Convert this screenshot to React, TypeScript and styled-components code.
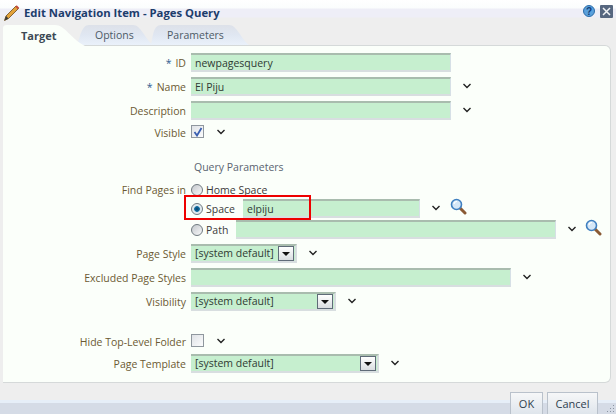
import styled, { createGlobalStyle } from 'styled-components';

const GlobalStyle = createGlobalStyle`
    html, body {
        margin: 0;
        padding: 0;
        background: #eeeeee;
    }
    * {
        box-sizing: border-box;
    }
`;

const Dialog = styled.div`
    width: 616px;
    height: 414px;
    overflow: hidden;
    display: flex;
    flex-direction: column;
    font-family: 'Open Sans', 'Liberation Sans', sans-serif;
    font-size: 10.5px;
    color: #3b3b3b;
    background: #eeeeee;
`;
const Header = styled.div`
    height: 25px;
    flex: none;
    display: flex;
    align-items: center;
    padding: 0 3px 0 3px;
    background: linear-gradient(180deg, #ffffff 0, #fbfdfd 8px, #eeeef7 9px, #eeeef7 17px, #eeeeee 18px);
`;
const Title = styled.h1`
    margin: 0 0 0 4px;
    font-size: 11.3px;
    font-weight: 700;
    color: #1d3d6b;
    flex: 1;
`;
const HeaderIcons = styled.div`
    display: flex;
    align-items: center;
    gap: 5px;
    margin-bottom: 3px;
`;
const TabBar = styled.div`
    height: 20px;
    flex: none;
    display: flex;
    padding-left: 3px;
    position: relative;
    z-index: 1;
`;
const TargetTab = styled.div`
    width: 82px;
    height: 21px;
    margin-right: -8px;
    padding-left: 18px;
    line-height: 21px;
    font-size: 11px;
    font-weight: 700;
    color: #3c4a55;
    background: #fbfffa;
    clip-path: path('M0 21 L0 3 Q0 0 4 0 L52 0 C62 0 68 14 82 21 Z');
    position: relative;
    z-index: 2;
`;
const Tab = styled.div<{ $w: number; $clip: string; $pad: number }>`
    width: ${(p) => p.$w}px;
    height: 20px;
    margin-right: -2px;
    padding-left: ${(p) => p.$pad}px;
    line-height: 21px;
    color: #4d5a66;
    background: linear-gradient(180deg, #dde1e9 0, #e0e7f2 50%, #eaf1fa 100%);
    clip-path: path('${(p) => p.$clip}');
`;
const Panel = styled.div`
    height: 338px;
    flex: none;
    margin: 0 5px 0 3px;
    padding-top: 7px;
    background: #fbfffa;
    border: 1px solid #d5d9d9;
    border-left: none;
    border-radius: 0 6px 6px 0;
    position: relative;
`;
const Row = styled.div<{ $h: number }>`
    height: ${(p) => p.$h}px;
    display: flex;
    align-items: flex-start;
    position: relative;
`;
const Label = styled.div`
    width: 183px;
    margin-right: 5px;
    text-align: right;
    line-height: 21px;
    color: #6b5a33;
    white-space: nowrap;
`;
const Required = styled.span`
    color: #2f5d91;
    margin-right: 4px;
`;
const SectionTitle = styled.div`
    padding-left: 3px;
    line-height: 19px;
    color: #5a6470;
`;
const Field = styled.div<{ $w: number }>`
    width: ${(p) => p.$w}px;
    height: 19px;
    flex: none;
    padding-left: 4px;
    color: #2f3a33;
    background: #c6efcf;
    border-top: 2px solid #a9bcae;
    border-bottom: 2px solid #d8dee0;
    border-right: 1px solid #d6e0e6;
    line-height: 17px;
`;
const SelectBox = styled(Field)`
    display: flex;
    justify-content: space-between;
    align-items: center;
    padding-right: 1px;
    border-right: 2px solid #d8dee0;
`;
const SelectButton = styled.span`
    width: 16px;
    height: 15px;
    display: flex;
    align-items: center;
    justify-content: center;
    background: linear-gradient(180deg, #ffffff, #d9dde0);
    border: 1px solid #5f6b78;
`;
const Arrow = styled.span`
    width: 0;
    height: 0;
    border-left: 4px solid transparent;
    border-right: 4px solid transparent;
    border-top: 4px solid #111111;
`;
const Check = styled.span`
    width: 13px;
    height: 13px;
    margin-top: 2px;
    flex: none;
    display: flex;
    align-items: center;
    justify-content: center;
    background: linear-gradient(135deg, #dfe2e6, #fbfcfd);
    border: 1px solid #8f979e;
`;
const ChevronWrap = styled.span<{ $gap?: number }>`
    display: flex;
    margin-left: ${(p) => p.$gap ?? 12}px;
    margin-top: 6px;
    flex: none;
`;
const RadioGroup = styled.div`
    display: flex;
    align-items: center;
    height: 19px;
    color: #3b3b3b;
`;
const Radio = styled.span<{ $on?: boolean }>`
    width: 12px;
    height: 12px;
    margin-right: 3px;
    flex: none;
    border-radius: 50%;
    border: 1px solid #6f7a80;
    background: ${(p) =>
        p.$on
            ? 'radial-gradient(circle at 50% 50%, #0d3f66 0, #0f6ea3 35%, #dbe6ec 45%, #f4f6f7 100%)'
            : 'linear-gradient(135deg, #c4c8cc, #f8f9fa)'};
`;
const RadioLabel = styled.span<{ $w?: number }>`
    width: ${(p) => (p.$w ? `${p.$w}px` : 'auto')};
    flex: none;
`;
const LensWrap = styled.span<{ $gap: number }>`
    display: flex;
    flex: none;
    margin-left: ${(p) => p.$gap}px;
    margin-top: -1px;
`;
const Highlight = styled.div`
    position: absolute;
    left: 181px;
    top: -4px;
    width: 127px;
    height: 25px;
    border: 2px solid #ee0000;
    pointer-events: none;
`;
const Footer = styled.div`
    flex: 1;
    display: flex;
    justify-content: flex-end;
    align-items: flex-start;
    gap: 4px;
    padding: 9px 18px 0 0;
    background: linear-gradient(180deg, #eeeeee 0, #eeeeee 17px, #e6eef8 17px, #e6eef8 20px, #d5dbe6 20px);
    position: relative;
`;
const Button = styled.button<{ $w: number }>`
    width: ${(p) => p.$w}px;
    height: 23px;
    padding: 0 0 1px;
    font-family: inherit;
    font-size: 11px;
    color: #2f3e4e;
    background: linear-gradient(180deg, #f6f7f8, #dfe5ec);
    border: 1px solid #b9c1cb;
    border-bottom-color: #8f99a6;
`;
const Grip = styled.svg`
    position: absolute;
    right: 1px;
    bottom: 1px;
`;

const Chevron = () => (
    <svg width="8" height="6" viewBox="0 0 8 6">
        <path d="M0.5 1 L4 4.5 L7.5 1" fill="none" stroke="#222222" strokeWidth="1.4" />
    </svg>
);

const Pencil = () => (
    <svg width="17" height="18" viewBox="0 0 17 18">
        <path d="M1.5 16.5 L3 12 L13 2 L15.5 4.5 L5.5 14.5 Z" fill="#e3a23a" stroke="#6a4a1e" strokeWidth="0.8" />
        <path d="M13 2 L15.5 4.5" stroke="#c24b3a" strokeWidth="2" />
        <path d="M1.5 16.5 L3 12 L5.5 14.5 Z" fill="#3b3b3b" />
    </svg>
);

const HelpIcon = () => (
    <svg width="12" height="12" viewBox="0 0 12 12">
        <circle cx="6" cy="6" r="5.5" fill="#5aa0dc" stroke="#2b6ca8" />
        <text x="6" y="9.5" textAnchor="middle" fontSize="10" fontWeight="700" fontFamily="Liberation Sans" fill="#0f3d78">
            ?
        </text>
    </svg>
);

const CloseIcon = () => (
    <svg width="13" height="13" viewBox="0 0 13 13">
        <rect width="13" height="13" rx="1" fill="#56677f" />
        <path d="M3 3 L10 10 M10 3 L3 10" stroke="#f2f4f6" strokeWidth="1.5" />
    </svg>
);

const Lens = () => (
    <svg width="17" height="17" viewBox="0 0 17 17">
        <path d="M10 10 L15 15" stroke="#8a5a34" strokeWidth="3" strokeLinecap="round" />
        <circle cx="6.5" cy="6.5" r="5" fill="#d5e7f7" stroke="#3f7fc0" strokeWidth="1.6" />
        <path d="M4 6 A3 3 0 0 1 7 3.5" fill="none" stroke="#ffffff" strokeWidth="1.2" />
    </svg>
);

const Tick = () => (
    <svg width="10" height="10" viewBox="0 0 10 10">
        <path d="M1.5 5 L4 8.5 L8.5 1" fill="none" stroke="#3a5fb0" strokeWidth="1.8" />
    </svg>
);

const Select = ({ w, value }: { w: number; value: string }) => (
    <SelectBox $w={w}>
        {value}
        <SelectButton>
            <Arrow />
        </SelectButton>
    </SelectBox>
);

export default function App() {
    return (
        <Dialog>
            <GlobalStyle />
            <Header>
                <Pencil />
                <Title>Edit Navigation Item - Pages Query</Title>
                <HeaderIcons>
                    <HelpIcon />
                    <CloseIcon />
                </HeaderIcons>
            </Header>
            <TabBar>
                <TargetTab>Target</TargetTab>
                <Tab $w={76} $pad={18} $clip="M0 20 C3 14 4 0 12 0 L56 0 C64 0 68 14 76 20 Z">
                    Options
                </Tab>
                <Tab $w={98} $pad={16} $clip="M0 20 C2 12 2 0 10 0 L78 0 C86 0 90 14 98 20 Z">
                    Parameters
                </Tab>
            </TabBar>
            <Panel>
                <Row $h={24}>
                    <Label>
                        <Required>*</Required>ID
                    </Label>
                    <Field $w={260}>newpagesquery</Field>
                </Row>
                <Row $h={24}>
                    <Label>
                        <Required>*</Required>Name
                    </Label>
                    <Field $w={260}>El Piju</Field>
                    <ChevronWrap>
                        <Chevron />
                    </ChevronWrap>
                </Row>
                <Row $h={22}>
                    <Label>Description</Label>
                    <Field $w={260} />
                    <ChevronWrap>
                        <Chevron />
                    </ChevronWrap>
                </Row>
                <Row $h={35}>
                    <Label>Visible</Label>
                    <Check>
                        <Tick />
                    </Check>
                    <ChevronWrap $gap={13}>
                        <Chevron />
                    </ChevronWrap>
                </Row>
                <Row $h={22}>
                    <Label />
                    <SectionTitle>Query Parameters</SectionTitle>
                </Row>
                <Row $h={19}>
                    <Label>Find Pages in</Label>
                    <RadioGroup>
                        <Radio />
                        Home Space
                    </RadioGroup>
                </Row>
                <Row $h={21}>
                    <Label />
                    <RadioGroup>
                        <Radio $on />
                        <RadioLabel $w={37}>Space</RadioLabel>
                    </RadioGroup>
                    <Field $w={177}>elpiju</Field>
                    <ChevronWrap>
                        <Chevron />
                    </ChevronWrap>
                    <LensWrap $gap={10}>
                        <Lens />
                    </LensWrap>
                    <Highlight />
                </Row>
                <Row $h={24}>
                    <Label />
                    <RadioGroup>
                        <Radio />
                        <RadioLabel $w={30}>Path</RadioLabel>
                    </RadioGroup>
                    <Field $w={320} />
                    <ChevronWrap>
                        <Chevron />
                    </ChevronWrap>
                    <LensWrap $gap={9}>
                        <Lens />
                    </LensWrap>
                </Row>
                <Row $h={24}>
                    <Label>Page Style</Label>
                    <Select w={106} value="[system default]" />
                    <ChevronWrap>
                        <Chevron />
                    </ChevronWrap>
                </Row>
                <Row $h={24}>
                    <Label>Excluded Page Styles</Label>
                    <Field $w={320} />
                    <ChevronWrap>
                        <Chevron />
                    </ChevronWrap>
                </Row>
                <Row $h={40}>
                    <Label>Visibility</Label>
                    <Select w={145} value="[system default]" />
                    <ChevronWrap>
                        <Chevron />
                    </ChevronWrap>
                </Row>
                <Row $h={22}>
                    <Label>Hide Top-Level Folder</Label>
                    <Check />
                    <ChevronWrap $gap={13}>
                        <Chevron />
                    </ChevronWrap>
                </Row>
                <Row $h={19}>
                    <Label>Page Template</Label>
                    <Select w={188} value="[system default]" />
                    <ChevronWrap>
                        <Chevron />
                    </ChevronWrap>
                </Row>
            </Panel>
            <Footer>
                <Button $w={33}>OK</Button>
                <Button $w={51}>Cancel</Button>
                <Grip width="12" height="10" viewBox="0 0 12 10">
                    <path d="M10 1h1v1h-1zM7 4h1v1H7zM10 4h1v1h-1zM4 7h1v1H4zM7 7h1v1H7zM10 7h1v1h-1z" fill="#8a94a2" />
                </Grip>
            </Footer>
        </Dialog>
    );
}
